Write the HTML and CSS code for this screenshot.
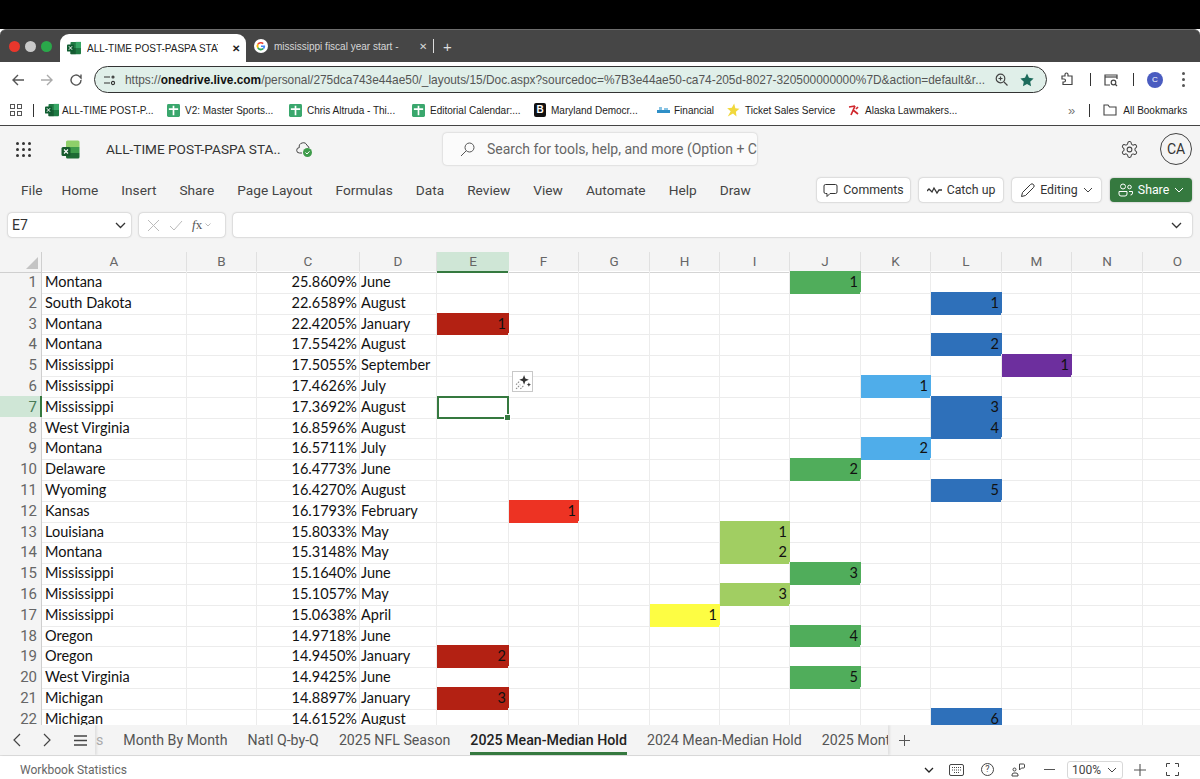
FILE: index.html
```html
<!DOCTYPE html>
<html lang="en">
<head>
  <meta charset="UTF-8" />
  <title>ALL-TIME POST-PASPA STATS</title>
  <link rel="stylesheet" href="styles.css">
</head>
<body>
  <svg class="defs" width="0" height="0">
    <symbol id="xl" viewBox="0 0 16 16">
      <rect x="4" y="1" width="12" height="14" rx="1" fill="#1f7a43"/>
      <rect x="10" y="1" width="6" height="7" fill="#37a665"/>
      <rect x="4" y="8" width="6" height="7" fill="#185c34"/>
      <rect x="0" y="4" width="8" height="8" rx="1" fill="#0f5c30"/>
      <path d="M2.2 6l3.6 4M5.8 6l-3.6 4" stroke="#fff" stroke-width="1.1"/>
    </symbol>
    <symbol id="gs" viewBox="0 0 14 14">
      <rect width="14" height="14" rx="1.5" fill="#3aa76d"/>
      <path d="M2 5.500h10M7 2v10" stroke="#fff" stroke-width="1.800"/>
    </symbol>
  </svg>

  <div class="topblack"></div>

  <!-- browser tabs -->
  <div class="tabstrip">
    <span class="light red"></span><span class="light grey"></span><span class="light green"></span>
    <div class="tab active">
      <svg width="14" height="14"><use href="#xl"/></svg>
      <span class="tab-title">ALL-TIME POST-PASPA STAT</span>
      <span class="tab-x">✕</span>
    </div>
    <div class="tab">
      <svg width="14" height="14" viewBox="0 0 48 48">
        <circle cx="24" cy="24" r="24" fill="#fff"/>
        <path d="M24 10a14 14 0 0 1 9.5 3.7l-4 4A8.500 8.500 0 0 0 16 20l-5-4a14 14 0 0 1 13-6z" fill="#ea4335"/>
        <path d="M11 16l5 4a8.500 8.500 0 0 0 0 8l-5 4a14 14 0 0 1 0-16z" fill="#fbbc05"/>
        <path d="M11 32l5-4a8.500 8.500 0 0 0 13 3l5 3.500A14 14 0 0 1 11 32z" fill="#34a853"/>
        <path d="M38 22v5a14 14 0 0 1-4 7.500L29 31a7 7 0 0 0 3-4h-8v-5z" fill="#4285f4"/>
      </svg>
      <span class="tab-title">mississippi fiscal year start -</span>
      <span class="tab-x">✕</span>
    </div>
    <span class="tab-sep"></span>
    <span class="tab-plus">+</span>
  </div>

  <!-- address bar -->
  <div class="toolbar">
    <svg class="nav-ico" width="14" height="14" viewBox="0 0 14 14" fill="none" stroke="#555" stroke-width="1.400"><path d="M13 7H2M7 2L2 7l5 5"/></svg>
    <svg class="nav-ico" width="14" height="14" viewBox="0 0 14 14" fill="none" stroke="#aaa" stroke-width="1.400"><path d="M1 7h11M7 2l5 5-5 5"/></svg>
    <svg class="nav-ico" width="14" height="14" viewBox="0 0 14 14" fill="none" stroke="#555" stroke-width="1.400"><path d="M12 7a5 5 0 1 1-1.500-3.500L12 5V1.500"/></svg>
    <div class="urlbar">
      <svg width="12" height="12" viewBox="0 0 12 12" fill="none" stroke="#333" stroke-width="1.100"><path d="M0 3h6M0 9h6"/><circle cx="9" cy="3" r="1"/><circle cx="9" cy="9" r="1.600"/></svg>
      <span class="url"><span class="url-dim">https://</span><span class="url-host">onedrive.live.com</span><span class="url-dim">/personal/275dca743e44ae50/_layouts/15/Doc.aspx?sourcedoc=%7B3e44ae50-ca74-205d-8027-320500000000%7D&amp;action=default&amp;r...</span></span>
      <svg class="url-zoom" width="13" height="13" viewBox="0 0 13 13" fill="none" stroke="#444" stroke-width="1.200"><circle cx="5.500" cy="5.500" r="4.300"/><path d="M9 9l3.500 3.500M3.500 5.500h4M5.500 3.500v4"/></svg>
      <svg width="14" height="14" viewBox="0 0 24 24" fill="#1d6b5c"><path d="M12 1l3.400 7.300 7.900 1-5.800 5.500 1.500 7.900-7-3.900-7 3.900 1.500-7.900L.7 9.300l7.900-1z"/></svg>
    </div>
    <svg class="tool-ico" width="15" height="15" viewBox="0 0 15 15" fill="none" stroke="#444" stroke-width="1.200"><path d="M2 4h3V2.500a1.500 1.500 0 0 1 3 0V4h4v8.500H3V10h1a1.500 1.500 0 0 0 0-3H2z"/></svg>
    <span class="bar-sep"></span>
    <svg class="tool-ico2" width="14" height="14" viewBox="0 0 14 14" fill="none" stroke="#444" stroke-width="1.200"><path d="M6 12H1V2h12v4"/><path d="M1 4h12"/><circle cx="9.500" cy="9.500" r="2.300"/><path d="M11 11l2 2"/></svg>
    <span class="bar-sep"></span>
    <span class="profile">C</span>
    <span class="kebab"><i></i><i></i><i></i></span>
  </div>

  <!-- bookmarks -->
  <div class="bookmarks">
    <svg class="bm-grid" width="12" height="12" viewBox="0 0 12 12" fill="none" stroke="#555"><rect x=".5" y=".5" width="4" height="4"/><rect x="7.500" y=".5" width="4" height="4"/><rect x=".5" y="7.500" width="4" height="4"/><rect x="7.500" y="7.500" width="4" height="4"/></svg>
    <span class="bar-sep bm-sep1"></span>
    <span class="bm bm1"><svg width="14" height="14"><use href="#xl"/></svg>ALL-TIME POST-P...</span>
    <span class="bm bm2"><svg width="13" height="13"><use href="#gs"/></svg>V2: Master Sports...</span>
    <span class="bm bm3"><svg width="13" height="13"><use href="#gs"/></svg>Chris Altruda - Thi...</span>
    <span class="bm bm4"><svg width="13" height="13"><use href="#gs"/></svg>Editorial Calendar:...</span>
    <span class="bm bm5"><span class="bm-black">B</span>Maryland Democr...</span>
    <span class="bm bm6"><svg width="13" height="6" viewBox="0 0 13 6"><rect width="13" height="3" y="3" fill="#2f8fc7"/><rect x="2" width="3" height="3" fill="#89c4e4"/><rect x="7" y="1" width="4" height="2" fill="#89c4e4"/></svg>Financial</span>
    <span class="bm bm7"><svg width="14" height="16" viewBox="0 0 24 24"><path d="M14 1l2 8 7 1-6 5 1 8-6-5-9 5 5-9-6-5 8-1z" fill="#f1d83c"/></svg>Ticket Sales Service</span>
    <span class="bm bm8"><svg width="12" height="12" viewBox="0 0 12 12" fill="none" stroke="#d0272d" stroke-width="1.700"><path d="M1 3l6-1M7 2L3 11M5 6l5 4M8 5l2-2"/></svg>Alaska Lawmakers...</span>
    <span class="bm-more">»</span>
    <span class="bar-sep bm-sep2"></span>
    <span class="bm bm-all"><svg width="14" height="12" viewBox="0 0 14 12" fill="none" stroke="#444" stroke-width="1.100"><path d="M1 1h4l1.500 2H13v8H1z"/></svg>All Bookmarks</span>
  </div>

  <!-- excel header -->
  <header class="apphead">
    <div class="waffle"><i></i><i></i><i></i><i></i><i></i><i></i><i></i><i></i><i></i></div>
    <svg class="xl-logo" width="19" height="19" viewBox="0 0 19 19">
      <path d="M5 2a1.500 1.500 0 0 1 1.500-1.500H17A1.500 1.500 0 0 1 18.500 2v5H5z" fill="#8fd06a"/>
      <rect x="5" y="7" width="13.500" height="6" fill="#3f9c4b"/>
      <path d="M5 13h13.500v4a1.500 1.500 0 0 1-1.500 1.500H6.500A1.500 1.500 0 0 1 5 17z" fill="#1d6a34"/>
      <rect x="0.500" y="7" width="9" height="9" rx="1.500" fill="#175a2d"/>
      <path d="M3 9.500l4 4M7 9.500l-4 4" stroke="#fff" stroke-width="1.100"/>
    </svg>
    <span class="doc-name">ALL-TIME POST-PASPA STA..</span>
    <svg class="cloud" width="17" height="17" viewBox="0 0 17 17" fill="none">
      <path d="M6 12H3.500a2.700 2.700 0 0 1-.2-5.400A4 4 0 0 1 11 4.500a3 3 0 0 1 2 2.500" stroke="#444" stroke-width="1"/>
      <circle cx="11.500" cy="11.500" r="4.500" fill="#3f9c4b"/>
      <path d="M9.500 11.500l1.500 1.500 2.500-2.700" stroke="#fff" stroke-width="1"/>
    </svg>
    <div class="search">
      <svg width="15" height="15" viewBox="0 0 15 15" fill="none" stroke="#555" stroke-width="1"><circle cx="9.500" cy="5.500" r="4.500"/><path d="M6.200 8.800L1 14"/></svg>
      <span class="search-text">Search for tools, help, and more (Option + C</span>
    </div>
    <svg class="gear" width="19" height="19" viewBox="0 0 24 24" fill="none" stroke="#444" stroke-width="1.300"><path d="M12.220 2h-.44a2 2 0 0 0-2 2v.18a2 2 0 0 1-1 1.730l-.43.250a2 2 0 0 1-2 0l-.15-.08a2 2 0 0 0-2.730.730l-.22.380a2 2 0 0 0 .730 2.730l.15.1a2 2 0 0 1 1 1.720v.51a2 2 0 0 1-1 1.740l-.15.09a2 2 0 0 0-.730 2.730l.22.380a2 2 0 0 0 2.730.730l.15-.08a2 2 0 0 1 2 0l.43.250a2 2 0 0 1 1 1.730V20a2 2 0 0 0 2 2h.44a2 2 0 0 0 2-2v-.18a2 2 0 0 1 1-1.730l.43-.250a2 2 0 0 1 2 0l.15.08a2 2 0 0 0 2.730-.730l.22-.39a2 2 0 0 0-.730-2.730l-.15-.08a2 2 0 0 1-1-1.740v-.5a2 2 0 0 1 1-1.740l.15-.09a2 2 0 0 0 .730-2.730l-.22-.380a2 2 0 0 0-2.730-.730l-.15.08a2 2 0 0 1-2 0l-.43-.250a2 2 0 0 1-1-1.730V4a2 2 0 0 0-2-2z"/><circle cx="12" cy="12" r="3"/></svg>
    <span class="avatar">CA</span>
  </header>

  <!-- ribbon tabs -->
  <nav class="menubar">
    <span>File</span><span>Home</span><span>Insert</span><span>Share</span><span>Page Layout</span><span>Formulas</span><span>Data</span><span>Review</span><span>View</span><span>Automate</span><span>Help</span><span>Draw</span>
    <div class="actions">
      <button class="btn btn-comments">
        <svg width="15" height="15" viewBox="0 0 15 15" fill="none" stroke="#333" stroke-width="1"><path d="M2.500 1.500h10a1.500 1.500 0 0 1 1.500 1.500v6a1.500 1.500 0 0 1-1.500 1.500H7l-3 3v-3H2.500A1.500 1.500 0 0 1 1 9V3a1.500 1.500 0 0 1 1.500-1.500z"/></svg>Comments</button>
      <button class="btn btn-catch">
        <svg width="15" height="9" viewBox="0 0 15 9" fill="none" stroke="#333" stroke-width="1.300"><path d="M0 5l2-2 3 3 2-4 3 5 2-3h3"/></svg>Catch up</button>
      <button class="btn btn-edit">
        <svg width="15" height="15" viewBox="0 0 15 15" fill="none" stroke="#333" stroke-width="1"><path d="M1.500 13.500l1-4L10.500 1.500a1.500 1.500 0 0 1 3 3L5.500 12.500z"/></svg>Editing<svg class="chev" width="10" height="6" viewBox="0 0 10 6" fill="none" stroke="#444" stroke-width="1"><path d="M1 1l4 4 4-4"/></svg></button>
      <button class="btn btn-share">
        <svg width="15" height="14" viewBox="0 0 15 14" fill="none" stroke="#fff" stroke-width="1"><circle cx="5" cy="3.500" r="2.500"/><circle cx="11.500" cy="4" r="1.800"/><path d="M1 8.500h8v2.500a2 2 0 0 1-2 2H3a2 2 0 0 1-2-2zM11 8.500h3.500V10a2 2 0 0 1-2 2"/></svg>Share<svg class="chev" width="10" height="6" viewBox="0 0 10 6" fill="none" stroke="#fff" stroke-width="1"><path d="M1 1l4 4 4-4"/></svg></button>
    </div>
  </nav>

  <!-- formula bar -->
  <div class="formulabar">
    <div class="namebox">E7
      <svg width="11" height="7" viewBox="0 0 11 7" fill="none" stroke="#333" stroke-width="1.300"><path d="M1 1l4.500 4.500L10 1"/></svg>
    </div>
    <div class="fxbox">
      <svg width="13" height="13" viewBox="0 0 13 13" fill="none" stroke="#bbb" stroke-width="1"><path d="M1 1l11 11M12 1L1 12"/></svg>
      <svg width="14" height="11" viewBox="0 0 14 11" fill="none" stroke="#bbb" stroke-width="1"><path d="M1 6l4 4 8-9"/></svg>
      <span class="fx"><i>f</i>x</span>
      <svg width="6" height="4" viewBox="0 0 6 4" fill="none" stroke="#bbb"><path d="M.5.5L3 3 5.500.5"/></svg>
    </div>
    <div class="formula-input">
      <svg width="11" height="7" viewBox="0 0 11 7" fill="none" stroke="#333" stroke-width="1.300"><path d="M1 1l4.500 4.500L10 1"/></svg>
    </div>
  </div>

  <!-- sheet -->
  <main class="sheet">
    <div class="row col-head">
      <b class="corner"></b><span>A</span><span>B</span><span>C</span><span>D</span><span class="cur">E</span><span>F</span><span>G</span><span>H</span><span>I</span><span>J</span><span>K</span><span>L</span><span>M</span><span>N</span><span>O</span>
    </div>
    <div class="row"><b>1</b><span>Montana</span><span></span><span class="pct">25.8609%</span><span class="mon">June</span><span></span><span></span><span></span><span></span><span></span><span class="n green">1</span><span></span><span></span><span></span><span></span><span></span></div>
    <div class="row"><b>2</b><span>South Dakota</span><span></span><span class="pct">22.6589%</span><span class="mon">August</span><span></span><span></span><span></span><span></span><span></span><span></span><span></span><span class="n blue">1</span><span></span><span></span><span></span></div>
    <div class="row"><b>3</b><span>Montana</span><span></span><span class="pct">22.4205%</span><span class="mon">January</span><span class="n darkred">1</span><span></span><span></span><span></span><span></span><span></span><span></span><span></span><span></span><span></span><span></span></div>
    <div class="row"><b>4</b><span>Montana</span><span></span><span class="pct">17.5542%</span><span class="mon">August</span><span></span><span></span><span></span><span></span><span></span><span></span><span></span><span class="n blue">2</span><span></span><span></span><span></span></div>
    <div class="row"><b>5</b><span>Mississippi</span><span></span><span class="pct">17.5055%</span><span class="mon">September</span><span></span><span></span><span></span><span></span><span></span><span></span><span></span><span></span><span class="n purple">1</span><span></span><span></span></div>
    <div class="row"><b>6</b><span>Mississippi</span><span></span><span class="pct">17.4626%</span><span class="mon">July</span><span></span><span></span><span></span><span></span><span></span><span></span><span class="n sky">1</span><span></span><span></span><span></span><span></span></div>
    <div class="row"><b class="cur-row">7</b><span>Mississippi</span><span></span><span class="pct">17.3692%</span><span class="mon">August</span><span class="selected"></span><span></span><span></span><span></span><span></span><span></span><span></span><span class="n blue">3</span><span></span><span></span><span></span></div>
    <div class="row"><b>8</b><span>West Virginia</span><span></span><span class="pct">16.8596%</span><span class="mon">August</span><span></span><span></span><span></span><span></span><span></span><span></span><span></span><span class="n blue">4</span><span></span><span></span><span></span></div>
    <div class="row"><b>9</b><span>Montana</span><span></span><span class="pct">16.5711%</span><span class="mon">July</span><span></span><span></span><span></span><span></span><span></span><span></span><span class="n sky">2</span><span></span><span></span><span></span><span></span></div>
    <div class="row"><b>10</b><span>Delaware</span><span></span><span class="pct">16.4773%</span><span class="mon">June</span><span></span><span></span><span></span><span></span><span></span><span class="n green">2</span><span></span><span></span><span></span><span></span><span></span></div>
    <div class="row"><b>11</b><span>Wyoming</span><span></span><span class="pct">16.4270%</span><span class="mon">August</span><span></span><span></span><span></span><span></span><span></span><span></span><span></span><span class="n blue">5</span><span></span><span></span><span></span></div>
    <div class="row"><b>12</b><span>Kansas</span><span></span><span class="pct">16.1793%</span><span class="mon">February</span><span></span><span class="n red">1</span><span></span><span></span><span></span><span></span><span></span><span></span><span></span><span></span><span></span></div>
    <div class="row"><b>13</b><span>Louisiana</span><span></span><span class="pct">15.8033%</span><span class="mon">May</span><span></span><span></span><span></span><span></span><span class="n lime">1</span><span></span><span></span><span></span><span></span><span></span><span></span></div>
    <div class="row"><b>14</b><span>Montana</span><span></span><span class="pct">15.3148%</span><span class="mon">May</span><span></span><span></span><span></span><span></span><span class="n lime">2</span><span></span><span></span><span></span><span></span><span></span><span></span></div>
    <div class="row"><b>15</b><span>Mississippi</span><span></span><span class="pct">15.1640%</span><span class="mon">June</span><span></span><span></span><span></span><span></span><span></span><span class="n green">3</span><span></span><span></span><span></span><span></span><span></span></div>
    <div class="row"><b>16</b><span>Mississippi</span><span></span><span class="pct">15.1057%</span><span class="mon">May</span><span></span><span></span><span></span><span></span><span class="n lime">3</span><span></span><span></span><span></span><span></span><span></span><span></span></div>
    <div class="row"><b>17</b><span>Mississippi</span><span></span><span class="pct">15.0638%</span><span class="mon">April</span><span></span><span></span><span></span><span class="n yellow">1</span><span></span><span></span><span></span><span></span><span></span><span></span><span></span></div>
    <div class="row"><b>18</b><span>Oregon</span><span></span><span class="pct">14.9718%</span><span class="mon">June</span><span></span><span></span><span></span><span></span><span></span><span class="n green">4</span><span></span><span></span><span></span><span></span><span></span></div>
    <div class="row"><b>19</b><span>Oregon</span><span></span><span class="pct">14.9450%</span><span class="mon">January</span><span class="n darkred">2</span><span></span><span></span><span></span><span></span><span></span><span></span><span></span><span></span><span></span><span></span></div>
    <div class="row"><b>20</b><span>West Virginia</span><span></span><span class="pct">14.9425%</span><span class="mon">June</span><span></span><span></span><span></span><span></span><span></span><span class="n green">5</span><span></span><span></span><span></span><span></span><span></span></div>
    <div class="row"><b>21</b><span>Michigan</span><span></span><span class="pct">14.8897%</span><span class="mon">January</span><span class="n darkred">3</span><span></span><span></span><span></span><span></span><span></span><span></span><span></span><span></span><span></span><span></span></div>
    <div class="row"><b>22</b><span>Michigan</span><span></span><span class="pct">14.6152%</span><span class="mon">August</span><span></span><span></span><span></span><span></span><span></span><span></span><span></span><span class="n blue">6</span><span></span><span></span><span></span></div>

    <div class="magic">
      <svg width="16" height="16" viewBox="0 0 15 15"><path d="M8.500 1l1.200 3.300L13 5.500 9.700 6.700 8.500 10 7.300 6.700 4 5.500l3.300-1.200zM13 8l.6 1.400L15 10l-1.400.6L13 12l-.6-1.400L11 10l1.400-.6z" fill="#333"/><path d="M1 14l4-4M1 10l3-3M5 14l3-3" stroke="#888" stroke-dasharray="1.500 1"/></svg>
    </div>
  </main>

  <!-- sheet tabs -->
  <div class="sheettabs">
    <div class="tab-nav">
      <svg width="9" height="14" viewBox="0 0 9 14" fill="none" stroke="#444" stroke-width="1.200"><path d="M8 1L2 7l6 6"/></svg>
      <svg width="9" height="14" viewBox="0 0 9 14" fill="none" stroke="#444" stroke-width="1.200"><path d="M1 1l6 6-6 6"/></svg>
      <svg width="13" height="11" viewBox="0 0 13 11" fill="none" stroke="#444" stroke-width="1.300"><path d="M0 1h13M0 5.500h13M0 10h13"/></svg>
    </div>
    <div class="tab-list">
      <span class="cut">s</span>
      <span>Month By Month</span>
      <span>Natl Q-by-Q</span>
      <span>2025 NFL Season</span>
      <span class="on">2025 Mean-Median Hold</span>
      <span>2024 Mean-Median Hold</span>
      <span>2025 Month</span>
    </div>
    <svg class="add-sheet" width="13" height="13" viewBox="0 0 13 13" stroke="#555" stroke-width="1"><path d="M6.500 1v11M1 6.500h11"/></svg>
  </div>

  <!-- status bar -->
  <footer class="statusbar">
    <span class="stats">Workbook Statistics</span>
    <svg class="st1" width="10" height="6" viewBox="0 0 10 6" fill="none" stroke="#222" stroke-width="1.300"><path d="M1 1l4 4 4-4"/></svg>
    <svg class="st2" width="15" height="12" viewBox="0 0 15 12" fill="none" stroke="#444"><rect x=".5" y=".5" width="14" height="11" rx="1.500"/><path d="M3 3.500h9M3 6h9M5 8.500h5" stroke-dasharray="1 1"/></svg>
    <span class="st3">?</span>
    <svg class="st4" width="14" height="14" viewBox="0 0 14 14" fill="none" stroke="#444"><circle cx="3.500" cy="6.500" r="1.500"/><path d="M1 13v-1a2 2 0 0 1 2-2h2a2 2 0 0 1 2 2v1zM8.500 1h4a1 1 0 0 1 1 1v2a1 1 0 0 1-1 1h-2l-2 2z"/></svg>
    <span class="zoom-minus"></span>
    <span class="zoom-box">100%<svg width="10" height="6" viewBox="0 0 10 6" fill="none" stroke="#444" stroke-width="1"><path d="M1 1l4 4 4-4"/></svg></span>
    <svg class="st5" width="12" height="12" viewBox="0 0 12 12" stroke="#555" stroke-width="1.100"><path d="M6 0v12M0 6h12"/></svg>
    <svg class="st6" width="13" height="13" viewBox="0 0 13 13" fill="none" stroke="#444" stroke-width="1"><path d="M.5 4V.5H4M9 .5h3.500V4M.5 9v3.500H4M9 12.500h3.500V9"/></svg>
  </footer>
</body>
</html>
```

FILE: styles.css
```css
* {
  box-sizing: border-box;
}

html, body {
  margin: 0;
  height: 779px;
  overflow: hidden;
}

body {
  width: 1200px;
  background: #fff;
  font-family: Roboto, sans-serif;
  color: #333;
}

.defs {
  position: absolute;
}

.topblack {
  height: 29px;
  background: #000;
}

/* browser chrome */
.tabstrip {
  height: 33px;
  background: #464646;
  border-top: 1px solid #6d6d6d;
  border-radius: 6px 6px 0 0;
  display: flex;
  align-items: center;
  padding-left: 9px;
  font-family: 'Liberation Sans', sans-serif;
  font-size: 10px;
}

.light {
  width: 11px;
  height: 11px;
  border-radius: 50%;
  margin-right: 5px;
}

.light.red { background: #e8372c; }
.light.grey { background: #c9c9c9; }
.light.green { background: #2aa84a; }

.tab {
  display: flex;
  align-items: center;
  height: 100%;
  color: #d6d6d6;
  padding-left: 7px;
  gap: 6px;
  flex: none;
}

.tab.active {
  background: #fff;
  color: #222;
  margin-left: 3px;
  width: 186px;
  height: 28px;
  align-self: flex-end;
  border-radius: 9px 9px 0 0;
}

.tab:not(.active) {
  margin-left: 1px;
  width: 186px;
}

.tab-title {
  white-space: nowrap;
  overflow: hidden;
  width: 131px;
  flex: none;
}

.tab:not(.active) .tab-title {
  width: 126px;
}

.tab-x {
  font-size: 10px;
  margin-left: 8px;
  font-weight: bold;
}

.tab:not(.active) .tab-x {
  margin-left: 13px;
  font-weight: normal;
}

.tab-sep {
  width: 1px;
  height: 14px;
  background: #ddd;
}

.tab-plus {
  color: #ddd;
  font-size: 15px;
  margin-left: 9px;
}

.toolbar {
  height: 35px;
  background: #fff;
  display: flex;
  align-items: center;
  padding-left: 11px;
  font-family: 'Liberation Sans', sans-serif;
}

.nav-ico {
  margin-right: 15px;
  flex: none;
}

.urlbar {
  width: 953px;
  height: 27px;
  margin-left: -4px;
  flex: none;
  border: 1px solid #333;
  border-radius: 14px;
  background: #e0efe9;
  display: flex;
  align-items: center;
  padding: 0 12px 0 9px;
  font-size: 11.9px;
}

.urlbar svg {
  flex: none;
}

.url {
  margin-left: 9px;
  white-space: nowrap;
  flex: 1;
  overflow: hidden;
}

.url-dim { color: #555; }
.url-host { color: #111; font-weight: bold; }

.urlbar .url-zoom { margin: 0 12px 0 6px; }

.tool-ico {
  margin-left: 13px;
  flex: none;
}

.bar-sep {
  width: 1px;
  height: 13px;
  background: #333;
  flex: none;
}

.toolbar .bar-sep {
  margin-left: 15px;
}

.tool-ico2 {
  margin-left: 13px;
  flex: none;
}

.profile {
  margin-left: 13px;
  width: 16px;
  height: 16px;
  flex: none;
  border-radius: 50%;
  background: #4a5cc0;
  color: #fff;
  font-size: 8px;
  display: flex;
  align-items: center;
  justify-content: center;
}

.kebab {
  margin-left: 19px;
  display: flex;
  flex-direction: column;
  gap: 3px;
}

.kebab i {
  display: block;
  width: 3px;
  height: 3px;
  border-radius: 50%;
  background: #555;
}

.bookmarks {
  height: 29px;
  padding-bottom: 2px;
  background: #fff;
  border-bottom: 1px solid #444;
  display: flex;
  align-items: center;
  padding-left: 10px;
  font-family: 'Liberation Sans', sans-serif;
  font-size: 10px;
  color: #222;
  white-space: nowrap;
}

.bm {
  display: flex;
  align-items: center;
  gap: 5px;
  flex: none;
}

.bm-sep1 { margin: 0 11px; }
.bm1 { width: 122px; gap: 3px; }
.bm2 { width: 122px; }
.bm3 { width: 123px; }
.bm4 { width: 122px; }
.bm5 { width: 123px; }
.bm6 { width: 69px; gap: 4px; }
.bm7 { width: 122px; }
.bm8 { width: 180px; }

.bm-black {
  width: 12px;
  height: 14px;
  background: #111;
  border-radius: 2px;
  color: #fff;
  font-size: 10px;
  font-weight: bold;
  text-align: center;
  line-height: 14px;
}

.bm-more {
  color: #777;
  font-size: 13px;
  margin-left: 40px;
}

.bm-sep2 { margin: 0 13px 0 14px; }

.bm-all { gap: 6px; }

/* excel header */
.apphead {
  height: 46px;
  background: #f4f4f4;
  display: flex;
  align-items: center;
  position: relative;
}

.waffle {
  display: grid;
  grid-template-columns: repeat(3, 3px);
  gap: 3px;
  margin-left: 16px;
}

.waffle i {
  width: 3px;
  height: 3px;
  border-radius: 50%;
  background: #333;
}

.xl-logo {
  margin-left: 30px;
}

.doc-name {
  margin-left: 26px;
  font-size: 13.6px;
  color: #333;
  width: 190px;
  white-space: nowrap;
}

.cloud {
  flex: none;
}

.search {
  margin-left: 130px;
  width: 314px;
  height: 32px;
  flex: none;
  background: #fbfbfb;
  border-radius: 4px;
  box-shadow: 0 0 2px rgba(0,0,0,.25);
  display: flex;
  align-items: center;
  padding-left: 17px;
  gap: 12px;
  overflow: hidden;
  white-space: nowrap;
  font-size: 14px;
  color: #666;
}

.search svg {
  flex: none;
}

.gear {
  margin-left: auto;
  margin-right: 21px;
}

.avatar {
  width: 32px;
  height: 32px;
  border: 1px solid #444;
  border-radius: 50%;
  display: flex;
  align-items: center;
  justify-content: center;
  font-size: 14px;
  margin-right: 8px;
}

.menubar {
  height: 37px;
  background: #f4f4f4;
  display: flex;
  align-items: center;
  gap: 23px;
  padding: 0 8px 1px 21px;
  font-size: 13.7px;
  color: #444;
  white-space: nowrap;
}

.menubar > span:first-child {
  margin-right: -4px;
}

.actions {
  margin-left: auto;
  display: flex;
  gap: 9px;
}

.btn {
  height: 24px;
  border: none;
  border-radius: 4px;
  background: #fff;
  box-shadow: 0 0 2px rgba(0,0,0,.35);
  font-family: inherit;
  font-size: 12.3px;
  color: #333;
  display: flex;
  align-items: center;
  justify-content: center;
  gap: 5px;
  padding: 0;
  flex: none;
}

.btn-comments { width: 93px; }
.btn-catch { width: 84px; }
.btn-edit { width: 89px; }

.btn-share {
  width: 82px;
  background: #35793f;
  color: #fff;
}

.chev {
  flex: none;
}

.formulabar {
  height: 43px;
  padding: 4px 8px 0;
  background: #f4f4f4;
  display: flex;
  gap: 8px;
}

.namebox, .fxbox, .formula-input {
  height: 24px;
  background: #fff;
  border-radius: 4px;
  box-shadow: 0 0 2px rgba(0,0,0,.35);
  display: flex;
  align-items: center;
  font-size: 14px;
}

.namebox {
  width: 123px;
  padding: 0 5px 0 4px;
  justify-content: space-between;
}

.fxbox {
  width: 86px;
  gap: 9px;
  padding-left: 8px;
  color: #555;
}

.fx {
  font-family: 'Liberation Serif', serif;
  font-size: 13px;
  margin-right: -6px;
}

.formula-input {
  flex: 1;
  justify-content: flex-end;
  padding-right: 10px;
}

/* sheet grid */
.sheet {
  height: 473px;
  position: relative;
  overflow: hidden;
  background: #fff;
  font-family: 'Lato', sans-serif;
  font-size: 14.5px;
  color: #111;
}

.row {
  display: grid;
  grid-template-columns: 42px 145px 70px 103px 77px 72px 70px 71px 70px 70px 71px 70px 71px 70px 71px 70px;
  height: 20.8px;
  line-height: 20.8px;
}

.row > span {
  border-right: 1px solid #ececec;
  border-bottom: 1px solid #ececec;
  padding: 1px 3px 0;
  white-space: nowrap;
}

.row > .mon {
  padding-left: 1px;
}

.row > .pct {
  text-align: right;
  padding-right: 2px;
}

.row > b {
  font-weight: normal;
  background: #f4f4f4;
  color: #666;
  text-align: right;
  padding: 1px 4px 0 0;
  border-right: 1px solid #cfcfcf;
  font-family: Roboto, sans-serif;
  font-size: 15px;
}

.col-head {
  height: 19px;
  line-height: 19px;
  background: #f4f4f4;
  font-family: Roboto, sans-serif;
  font-size: 13.5px;
}

.col-head > span {
  color: #666;
  text-align: center;
  border-right: 1px solid #e0e0e0;
  border-bottom: 1px solid #d4d4d4;
  padding: 0;
}

.col-head .cur {
  background: #cfe6d6;
  border-bottom: 2px solid #35793f;
  border-right: none;
}

.corner {
  position: relative;
  border-bottom: 1px solid #cfcfcf;
}

.corner::after {
  content: "";
  position: absolute;
  right: 3px;
  bottom: 3px;
  border-style: solid;
  border-width: 0 0 12px 12px;
  border-color: transparent transparent #c4c4c4 transparent;
}

.row .cur-row {
  background: #cfe6d6;
  border-right: 2px solid #35793f;
  color: #4a7a58;
  padding-right: 3px;
}

.row .n {
  text-align: right;
  border-right: none;
  border-bottom: none;
  color: #111;
}

.green { background: #50ad5b; }
.blue { background: #2e70ba; }
.darkred { background: #b32113; }
.red { background: #ed3323; }
.purple { background: #6d2f9e; }
.sky { background: #4fadea; }
.lime { background: #a1ce62; }
.yellow { background: #fdfd43; }

.selected {
  position: relative;
}

.selected::before {
  content: "";
  position: absolute;
  left: 0;
  top: 0;
  right: -1px;
  bottom: -1px;
  border: 2px solid #35793f;
}

.selected::after {
  content: "";
  position: absolute;
  right: -3px;
  bottom: -3px;
  width: 5px;
  height: 5px;
  background: #35793f;
  border: 1px solid #fff;
}

.magic {
  position: absolute;
  left: 512px;
  top: 119px;
  width: 21px;
  height: 21px;
  background: #fff;
  border: 1px solid #c8c8c8;
  display: flex;
  align-items: center;
  justify-content: center;
}

/* sheet tabs */
.sheettabs {
  height: 31px;
  background: #f4f4f4;
  border-bottom: 1px solid #dedede;
  display: flex;
  align-items: center;
  font-size: 14.2px;
  color: #555;
}

.tab-nav {
  width: 95px;
  height: 100%;
  flex: none;
  display: flex;
  align-items: center;
  gap: 22px;
  padding-left: 12px;
  box-shadow: 2px 0 2px rgba(0,0,0,.08);
}

.tab-list {
  width: 793px;
  height: 100%;
  flex: none;
  display: flex;
  align-items: center;
  gap: 20px;
  overflow: hidden;
  white-space: nowrap;
  padding-left: 1px;
  box-shadow: 2px 0 2px rgba(0,0,0,.08);
}

.tab-list .cut {
  width: 8px;
  color: #aaa;
}

.tab-list .on {
  color: #222;
  font-weight: 500;
  height: 100%;
  line-height: 30px;
  border-bottom: 3px solid #35793f;
}

.add-sheet {
  margin-left: 10px;
}

/* status bar */
.statusbar {
  height: 23px;
  background: #fff;
  display: flex;
  align-items: center;
  font-size: 12px;
  color: #666;
  padding: 4px 0 0 20px;
}

.stats {
  width: 904px;
}

.st2 { margin-left: 15px; }

.st3 {
  margin-left: 17px;
  width: 13px;
  height: 13px;
  border: 1px solid #444;
  border-radius: 50%;
  font-size: 9px;
  line-height: 11px;
  text-align: center;
  color: #444;
}

.st4 { margin-left: 17px; }

.zoom-minus {
  width: 11px;
  height: 1px;
  background: #555;
  margin-left: 19px;
}

.zoom-box {
  margin-left: 12px;
  width: 56px;
  height: 18px;
  border: 1px solid #d8d8d8;
  border-radius: 3px;
  display: flex;
  align-items: center;
  gap: 6px;
  padding-left: 4px;
  font-size: 12px;
  color: #444;
}

.st5 { margin-left: 11px; }
.st6 { margin-left: 20px; }
```
